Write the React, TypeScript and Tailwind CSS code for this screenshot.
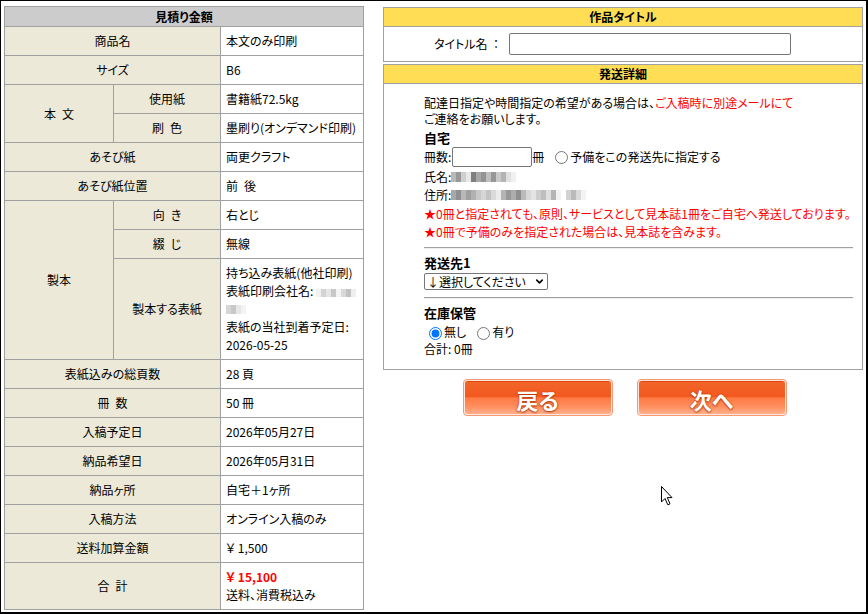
import React from "react";
import { ChevronDown } from "lucide-react";

function L({ children, className = "" }: { children: React.ReactNode; className?: string }) {
  return (
    <div className={`flex items-center justify-center bg-[#ece9d8] whitespace-nowrap ${className}`}>{children}</div>
  );
}

function V({ children, className = "" }: { children: React.ReactNode; className?: string }) {
  return <div className={`flex items-center bg-white pl-[5px] whitespace-nowrap ${className}`}>{children}</div>;
}

function Blur({ shades, h = "h-[10px]" }: { shades: string[]; h?: string }) {
  return (
    <span className="inline-flex align-middle">
      {shades.map((c, i) => (
        <span key={i} className={`w-[5px] ${h} ${c}`} />
      ))}
    </span>
  );
}

function EstimateTable() {
  return (
    <div className="grid w-[360px] grid-cols-[108px_106px_142px] grid-rows-[19px_28px_28px_28px_28px_28px_28px_28px_28px_100px_28px_28px_28px_28px_28px_28px_28px_46px] gap-px border border-[#a0a0a0] bg-[#a0a0a0]">
      <div className="col-span-3 flex items-center justify-center bg-[#cccccc] font-bold">見積り金額</div>

      <L className="col-span-2">商品名</L>
      <V>本文のみ印刷</V>

      <L className="col-span-2">サイズ</L>
      <V>B6</V>

      <L className="row-span-2">本&ensp;文</L>
      <L>使用紙</L>
      <V>書籍紙72.5kg</V>
      <L>刷&ensp;色</L>
      <V>墨刷り(オンデマンド印刷)</V>

      <L className="col-span-2">あそび紙</L>
      <V>両更クラフト</V>

      <L className="col-span-2">あそび紙位置</L>
      <V>前&ensp;後</V>

      <L className="row-span-3">製本</L>
      <L>向&ensp;き</L>
      <V>右とじ</V>
      <L>綴&ensp;じ</L>
      <V>無線</V>
      <L>製本する表紙</L>
      <div className="flex flex-col justify-center bg-white pl-[5px] leading-[18px] whitespace-nowrap">
        <div>持ち込み表紙(他社印刷)</div>
        <div className="flex items-center">
          表紙印刷会社名:
          <span className="ml-[3px]">
            <Blur shades={["bg-[#f2f2f2]", "bg-[#d4d4d4]", "bg-[#e6e6e6]", "bg-[#c8c8c8]", "bg-[#f4f4f4]", "bg-[#d8d8d8]", "bg-[#c2c2c2]", "bg-[#eeeeee]"]} h="h-[8px]" />
          </span>
        </div>
        <div className="flex h-[18px] items-center">
          <Blur shades={["bg-[#d6d6d6]", "bg-[#c8c8c8]", "bg-[#e6e6e6]", "bg-[#f3f3f3]"]} h="h-[9px]" />
        </div>
        <div>表紙の当社到着予定日:</div>
        <div>2026-05-25</div>
      </div>

      <L className="col-span-2">表紙込みの総頁数</L>
      <V>28 頁</V>

      <L className="col-span-2">冊&ensp;数</L>
      <V>50 冊</V>

      <L className="col-span-2">入稿予定日</L>
      <V>2026年05月27日</V>

      <L className="col-span-2">納品希望日</L>
      <V>2026年05月31日</V>

      <L className="col-span-2">納品ヶ所</L>
      <V>自宅＋1ヶ所</V>

      <L className="col-span-2">入稿方法</L>
      <V>オンライン入稿のみ</V>

      <L className="col-span-2">送料加算金額</L>
      <V>￥ 1,500</V>

      <L className="col-span-2">合&ensp;計</L>
      <div className="flex flex-col justify-center bg-white pl-[5px] leading-[18px] whitespace-nowrap">
        <div className="font-bold text-[#ff0000]">￥ 15,100</div>
        <div>送料、消費税込み</div>
      </div>
    </div>
  );
}

function OrangeButton({ label }: { label: string }) {
  return (
    <div className="h-[37px] w-[150px] rounded-[4px] border border-[#f29a72] bg-[#ffe6da] p-px">
      <div className="flex h-full w-full items-center justify-center rounded-[3px] border-t border-[#e0460c] bg-[linear-gradient(to_bottom,#f2652a_0%,#f2581f_45%,#ff7a45_50%,#ff8c5c_75%,#ffb08c_100%)]">
        <span className="pt-[1px] text-[22px] font-bold leading-none text-white [text-shadow:0_0_2px_#b53a0a,0_1px_2px_#b53a0a]">
          {label}
        </span>
      </div>
    </div>
  );
}

function Cursor() {
  return (
    <svg className="absolute left-[659px] top-[484px]" width="14" height="22" viewBox="0 0 14 22">
      <path d="M1.5 1.5 L1.5 17 L5 13.5 L7.8 19.8 L10 18.8 L7.3 12.6 L12 12.6 Z" fill="#ffffff" stroke="#000000" strokeWidth="1" strokeLinejoin="miter" />
    </svg>
  );
}

function Hr() {
  return <div className="border-t border-b border-t-[#a0a0a0] border-b-[#eeeeee]" />;
}

export default function App() {
  return (
    <div className="relative h-[614px] w-[868px] overflow-hidden border-t border-l border-r-2 border-b-2 border-black bg-white text-[12px] leading-[16px] text-black font-['Noto_Sans_CJK_JP',sans-serif] [font-feature-settings:'palt']">
      <div className="flex items-start pl-[3px] pt-[5px]">
        <EstimateTable />

        <div className="ml-[19px] mt-[1px] flex w-[480px] flex-col">
          {/* 作品タイトル */}
          <div className="border border-[#a0a0a0]">
            <div className="flex h-[19px] items-center justify-center border-b border-[#a0a0a0] bg-[#ffdd55] font-bold">
              作品タイトル
            </div>
            <div className="flex h-[34px] items-center pl-[50px]">
              <span className="w-[75px] whitespace-nowrap">タイトル名&nbsp;&nbsp;：</span>
              <div className="h-[22px] w-[282px] rounded-[2px] border border-[#767676] bg-white" />
            </div>
          </div>

          {/* 発送詳細 */}
          <div className="mt-[2px] border border-[#a0a0a0]">
            <div className="flex h-[19px] items-center justify-center border-b border-[#a0a0a0] bg-[#ffdd55] font-bold">
              発送詳細
            </div>
            <div className="pb-[12px] pl-[40px] pr-[9px] pt-[11px]">
              <div className="whitespace-nowrap">
                配達日指定や時間指定の希望がある場合は、
                <span className="text-[#ff0000]">ご入稿時に別途メールにて</span>
              </div>
              <div>ご連絡をお願いします。</div>

              <div className="mt-[3px] text-[13px] font-bold">自宅</div>
              <div className="flex h-[22px] items-center whitespace-nowrap">
                <span>冊数:</span>
                <div className="ml-[1px] h-[20px] w-[80px] rounded-[2px] border border-[#767676] bg-white" />
                <span>冊</span>
                <input type="radio" name="yobi" className="ml-[11px] mr-[2px] h-[13px] w-[13px]" readOnly />
                <span>予備をこの発送先に指定する</span>
              </div>
              <div className="flex h-[18px] items-center">
                <span>氏名:</span>
                <Blur shades={["bg-[#b8b8b8]", "bg-[#999999]", "bg-[#cfcfcf]", "bg-[#e8e8e8]", "bg-[#808080]", "bg-[#a8a8a8]", "bg-[#939393]", "bg-[#bfbfbf]", "bg-[#969696]", "bg-[#c9c9c9]", "bg-[#b3b3b3]", "bg-[#e0e0e0]", "bg-[#f0f0f0]"]} />
              </div>
              <div className="flex h-[18px] items-center">
                <span>住所:</span>
                <Blur shades={["bg-[#a8a8a8]", "bg-[#909090]", "bg-[#b8b8b8]", "bg-[#a0a0a0]", "bg-[#b0b0b0]", "bg-[#c8c8c8]", "bg-[#d6d6d6]", "bg-[#c4c4c4]", "bg-[#dadada]", "bg-[#ececec]", "bg-[#b4b4b4]", "bg-[#989898]", "bg-[#adadad]", "bg-[#8f8f8f]", "bg-[#bbbbbb]", "bg-[#d8d8d8]", "bg-[#e4e4e4]", "bg-[#cdcdcd]", "bg-[#bebebe]", "bg-[#dfdfdf]", "bg-[#b5b5b5]", "bg-[#f2f2f2]", "bg-[#ffffff]", "bg-[#d2d2d2]", "bg-[#bababa]", "bg-[#dadada]", "bg-[#f3f3f3]"]} />
              </div>
              <div className="mt-[1px] flex h-[18px] items-center whitespace-nowrap text-[#ff0000]">
                ★0冊と指定されても、原則、サービスとして見本誌1冊をご自宅へ発送しております。
              </div>
              <div className="flex h-[18px] items-center whitespace-nowrap text-[#ff0000]">
                ★0冊で予備のみを指定された場合は、見本誌を含みます。
              </div>

              <div className="mt-[6px]">
                <Hr />
              </div>

              <div className="mt-[6px] text-[13px] font-bold">発送先1</div>
              <div className="mt-[2px] flex h-[17px] w-[124px] items-center justify-between rounded-[2px] border border-[#767676] bg-white pl-[2px] pr-[2px] whitespace-nowrap">
                <span>↓選択してください</span>
                <ChevronDown size={11} strokeWidth={3.5} />
              </div>

              <div className="mt-[7px]">
                <Hr />
              </div>

              <div className="mt-[6px] text-[13px] font-bold">在庫保管</div>
              <div className="mt-[4px] flex h-[16px] items-center pl-[5px]">
                <input type="radio" name="zaiko" defaultChecked className="m-0 h-[13px] w-[13px]" />
                <span className="ml-[2px] -mt-[3px]">無し</span>
                <input type="radio" name="zaiko" className="m-0 ml-[11px] h-[13px] w-[13px]" />
                <span className="ml-[2px] -mt-[3px]">有り</span>
              </div>
              <div>合計: 0冊</div>
            </div>
          </div>

          <div className="mt-[9px] flex justify-center gap-[24px] pl-[3px]">
            <OrangeButton label="戻る" />
            <OrangeButton label="次へ" />
          </div>
        </div>
      </div>
      <Cursor />
    </div>
  );
}
